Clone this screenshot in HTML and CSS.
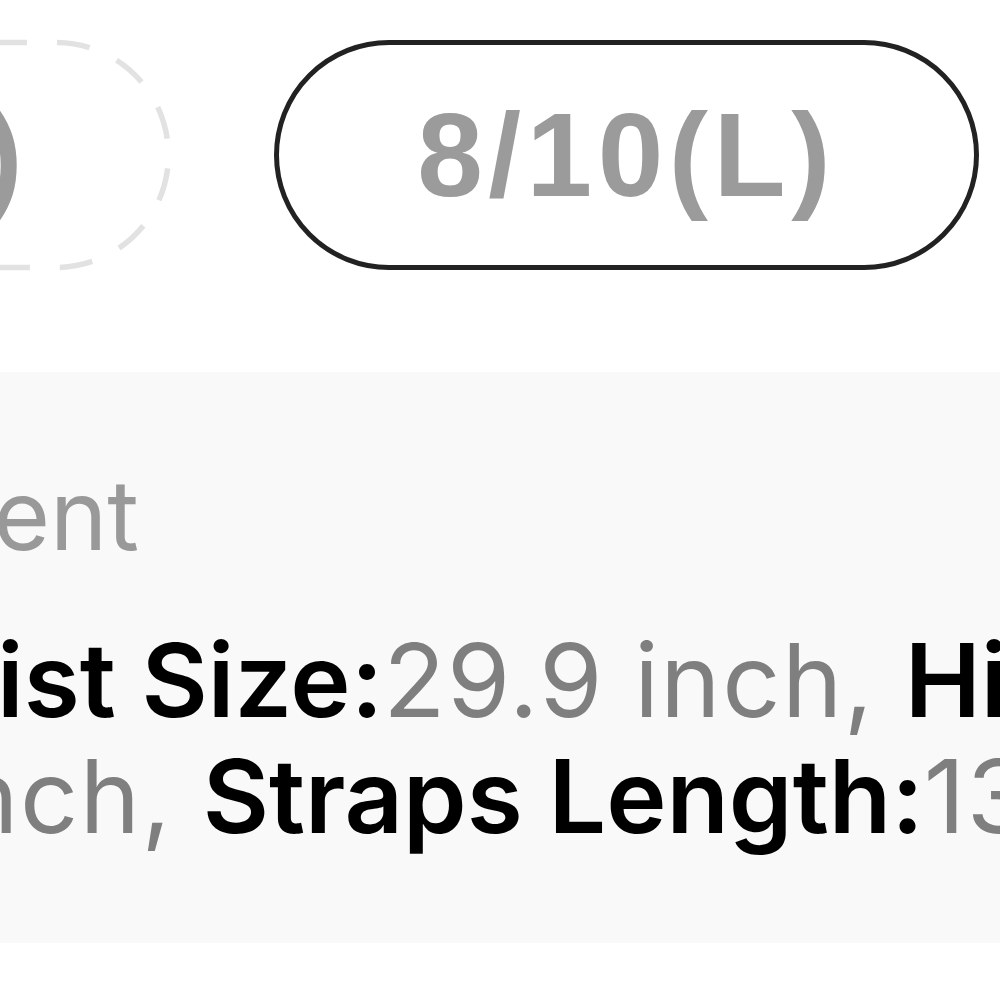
FILE: index.html
```html
<!DOCTYPE html>
<html lang="en">
<head>
<meta charset="utf-8">
<title>Size selector</title>
<link rel="stylesheet" href="styles.css">
</head>
<body>
<div class="page">
  <div class="options">
    <div class="pill pill-disabled">
      <svg class="dash-outline" aria-hidden="true"><rect class="dash-rect" rx="112.5" ry="112.5"></rect></svg>
      <span class="pill-label">4/6(M)</span>
    </div>
    <div class="pill pill-selected"><span class="pill-label">8/10(L)</span></div>
  </div>
  <section class="panel">
    <div class="panel-title"><span>Size Measurement</span></div>
    <p class="spec">
      <span class="spec-line spec-line-1"><b class="k">Waist Size:</b><span class="v">29.9 inch, </span><b class="k">Hip Size:</b><span class="v">40.2 inch,</span></span>
      <span class="spec-line spec-line-2"><span class="v">inch, </span><b class="k">Straps Length:</b><span class="v">13.4 inch</span></span>
    </p>
  </section>
</div>
</body>
</html>
```
FILE: styles.css
```css
html, body {
  margin: 0;
  padding: 0;
  background: #ffffff;
}
body {
  width: 1000px;
  height: 1000px;
  overflow: hidden;
  font-family: Inter, "Noto Sans", sans-serif;
}
.page {
  width: 1000px;
  padding-top: 40px;
}
.options {
  display: flex;
  justify-content: flex-end;
  gap: 103px;
  padding-right: 21px;
}
.pill {
  flex: none;
  box-sizing: border-box;
  height: 230px;
  padding: 0 138px;
  border-radius: 999px;
  display: flex;
  align-items: center;
  justify-content: center;
  white-space: nowrap;
}
.pill-selected {
  border: 5px solid #222222;
}
.pill-disabled {
  position: relative;
  border: 5px solid transparent;
}
.dash-outline {
  position: absolute;
  left: -5px;
  top: -5px;
  width: calc(100% + 10px);
  height: calc(100% + 10px);
  overflow: visible;
}
.dash-rect {
  x: 2.5px;
  y: 2.5px;
  width: calc(100% - 5px);
  height: calc(100% - 5px);
  fill: none;
  stroke: #e2e2e2;
  stroke-width: 5.5px;
  stroke-dasharray: 33 30;
  stroke-dashoffset: 10;
}
.pill-label {
  font-family: "Liberation Sans", Arial, sans-serif;
  font-weight: 700;
  font-size: 118px;
  line-height: 118px;
  letter-spacing: 5.5px;
  color: #9b9b9b;
}
.panel {
  margin-top: 102px;
  background: #f9f9f9;
  padding: 85px 0 89px;
  overflow: hidden;
}
.panel-title {
  display: flex;
  justify-content: flex-end;
  width: 139px;
  white-space: nowrap;
  font-size: 97px;
  line-height: 116px;
  color: #999999;
  margin-bottom: 49px;
}
.spec {
  margin: 0;
  font-size: 102px;
  line-height: 116px;
  white-space: nowrap;
}
.spec-line {
  display: block;
}
.spec-line-1 {
  margin-left: -160px;
}
.spec-line-2 {
  margin-left: -68px;
}
.k {
  font-weight: 560;
  color: #000000;
}
.v {
  font-weight: 400;
  color: #7f7f7f;
  letter-spacing: 1.5px;
}
```
